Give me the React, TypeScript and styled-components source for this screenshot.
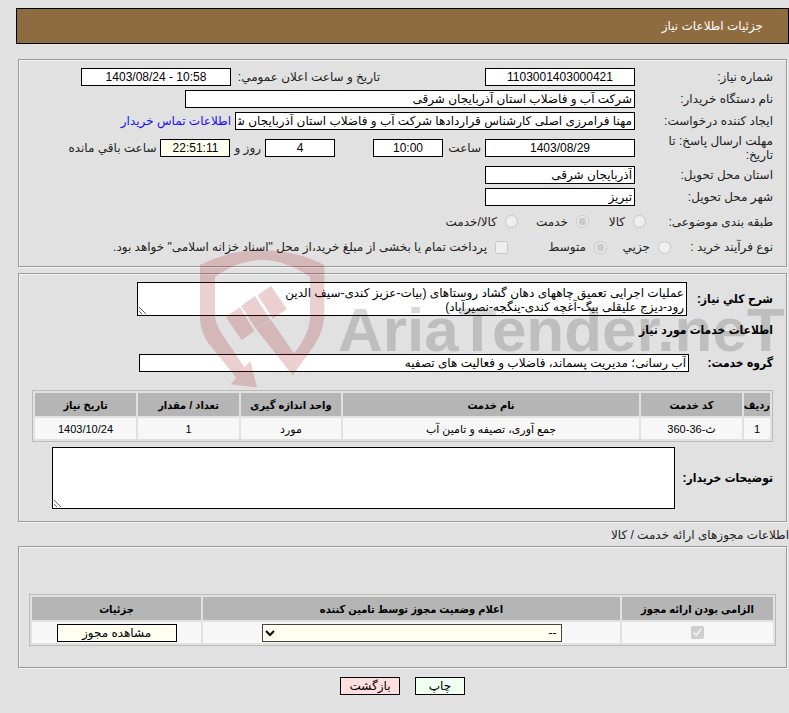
import React from "react";
import styled, { createGlobalStyle } from "styled-components";

const GlobalStyle = createGlobalStyle`
  * { box-sizing: border-box; }
  body {
    margin: 0;
    background: #e1e1e1;
    color: #222;
    font: 12px/14px "Liberation Sans", "DejaVu Sans", sans-serif;
  }
  input, textarea, select, button { font: inherit; color: #000; border-radius: 0; }
`;

const boldStack = `"Liberation Sans", "DejaVu Sans Condensed", sans-serif`;

const Page = styled.main`
  position: relative;
  padding: 8px 0 16px 16px;
`;

const TitleBar = styled.header`
  display: flex;
  align-items: center;
  height: 36px;
  padding: 0 25px;
  background: #8f6b40;
  border: 1px solid #000;
  color: #fff;
  h1 { margin: 0; font-size: 12px; font-weight: normal; }
`;

const Panel = styled.fieldset<{ $top: number; $pad: string }>`
  min-width: 0;
  margin: ${(p) => p.$top}px 2px 0;
  padding: ${(p) => p.$pad};
  border: 1px solid #9a9a9a;
  box-shadow: 1px 1px 0 #f4f4f4, inset 1px 1px 0 #f4f4f4;
`;

const Row = styled.div<{ $h?: number; $top?: number; $end?: number }>`
  display: flex;
  align-items: center;
  gap: 4px;
  height: ${(p) => p.$h ?? 22}px;
  margin-top: ${(p) => p.$top ?? 0}px;
  padding-left: ${(p) => p.$end ?? 0}px;
`;

const FieldLabel = styled.label<{ $w?: number }>`
  flex: 0 0 ${(p) => p.$w ?? 134}px;
  padding-left: 20px;
`;

const BoldLabel = styled.label<{ $w: number }>`
  flex: 0 0 ${(p) => p.$w}px;
  font-family: ${boldStack};
  font-weight: bold;
  color: #000;
  white-space: nowrap;
`;

const GroupLabel = styled.span<{ $w: number }>`
  flex: 0 0 ${(p) => p.$w}px;
  white-space: nowrap;
`;

const Note = styled.span`
  white-space: nowrap;
`;

const InlineLabel = styled.label<{ $start?: number; $w: number }>`
  flex: 0 0 ${(p) => p.$w}px;
  white-space: nowrap;
  margin-right: ${(p) => p.$start ?? 0}px;
`;

const TextBox = styled.input<{ $w: number; $center?: boolean; $tint?: boolean; $start?: number }>`
  width: ${(p) => p.$w}px;
  height: 18px;
  padding: 0 2px;
  margin: 0 ${(p) => p.$start ?? 0}px 0 0;
  border: 1px solid #000;
  background: ${(p) => (p.$tint ? "#fffff0" : "#fff")};
  text-align: ${(p) => (p.$center ? "center" : "right")};
`;

const ContactLink = styled.a`
  color: #1a0dff;
  text-decoration: none;
  white-space: nowrap;
`;

const Choice = styled.label<{ $w: number }>`
  display: flex;
  align-items: center;
  gap: 8px;
  flex: 0 0 ${(p) => p.$w}px;
  white-space: nowrap;
  input { margin: 0; width: 13px; height: 13px; }
`;

const Area = styled.textarea<{ $h: number }>`
  flex: 1;
  height: ${(p) => p.$h}px;
  padding: 3px 2px 1px;
  border: 1px solid #000;
  background: #fff;
  overflow: hidden;
`;

const SubHeading = styled.h2`
  margin: 7px 0 17px;
  font-family: ${boldStack};
  font-size: 12px;
  line-height: 14px;
  color: #000;
`;

const Grid = styled.table<{ $top?: number }>`
  width: 100%;
  margin-top: ${(p) => p.$top ?? 0}px;
  table-layout: fixed;
  border: 1px solid #bbb;
  border-spacing: 2px;
  text-align: center;
  font-size: 11px;
  color: #000;
  th, td { padding: 0; }
  th {
    height: 23px;
    background: #b5b5b5;
    white-space: nowrap;
    font-family: ${boldStack};
  }
  td { height: 21px; background: #f7f7f7; }
  td input { display: block; margin: 0 auto; width: 13px; height: 13px; }
`;

const Col = styled.col<{ $w?: number }>`
  width: ${(p) => (p.$w ? `${p.$w}px` : "auto")};
`;

const Status = styled.select`
  display: block;
  width: 300px;
  height: 18px;
  margin: 0 auto;
  padding: 0;
  border: 1px solid #444;
  background: #fffff0;
  font-size: 12px;
`;

const ActionButton = styled.button<{ $w: number; $bg: string }>`
  display: block;
  width: ${(p) => p.$w}px;
  height: 18px;
  padding: 0;
  border: 1px solid #000;
  background: ${(p) => p.$bg};
  font-size: 12px;
  line-height: 16px;
`;

const CellAction = styled.div`
  display: flex;
  justify-content: center;
`;

const SectionTitle = styled.p`
  margin: 6px 0 0;
`;

const Footer = styled.footer`
  display: flex;
  justify-content: center;
  gap: 15px;
  margin: 9px 0 0;
`;

const Watermark = styled.svg`
  position: absolute;
  left: 195px;
  top: 245px;
  pointer-events: none;
`;

const Brand = styled.text`
  font: bold 62px "Liberation Sans", sans-serif;
`;

export default function App() {
  return (
    <Page dir="rtl">
      <GlobalStyle />
      <TitleBar>
        <h1>جزئیات اطلاعات نیاز</h1>
      </TitleBar>

      <Panel $top={15} $pad="6px 13px 7px">
        <Row>
          <FieldLabel htmlFor="no">شماره نیاز:</FieldLabel>
          <TextBox id="no" $w={150} $center readOnly defaultValue="1103001403000421" />
          <InlineLabel htmlFor="pub" $w={145} $start={101}>تاریخ و ساعت اعلان عمومي:</InlineLabel>
          <TextBox id="pub" dir="ltr" $w={150} $center readOnly defaultValue="1403/08/24 - 10:58" />
        </Row>
        <Row>
          <FieldLabel htmlFor="org">نام دستگاه خریدار:</FieldLabel>
          <TextBox id="org" $w={450} readOnly defaultValue="شرکت آب و فاضلاب استان آذربایجان شرقی" />
        </Row>
        <Row>
          <FieldLabel htmlFor="creator">ایجاد کننده درخواست:</FieldLabel>
          <TextBox id="creator" $w={400} readOnly defaultValue="مهنا فرامرزی اصلی کارشناس قراردادها شرکت آب و فاضلاب استان آذربایجان شرقی" />
          <ContactLink href="#contact">اطلاعات تماس خریدار</ContactLink>
        </Row>
        <Row $h={32}>
          <FieldLabel htmlFor="due">مهلت ارسال پاسخ: تا تاریخ:</FieldLabel>
          <TextBox id="due" $w={150} $center readOnly defaultValue="1403/08/29" />
          <InlineLabel htmlFor="hour" $w={34}>ساعت</InlineLabel>
          <TextBox id="hour" $w={70} $center readOnly defaultValue="10:00" />
          <TextBox aria-label="روز" $w={70} $center $start={34} readOnly defaultValue="4" />
          <InlineLabel htmlFor="left" $w={26}>روز و</InlineLabel>
          <TextBox id="left" $w={70} $center $tint readOnly defaultValue="22:51:11" />
          <Note>ساعت باقي مانده</Note>
        </Row>
        <Row>
          <FieldLabel htmlFor="province">استان محل تحویل:</FieldLabel>
          <TextBox id="province" $w={150} readOnly defaultValue="آذربایجان شرقی" />
        </Row>
        <Row>
          <FieldLabel htmlFor="city">شهر محل تحویل:</FieldLabel>
          <TextBox id="city" $w={150} readOnly defaultValue="تبریز" />
        </Row>
        <Row $h={27} role="radiogroup" aria-label="طبقه بندی موضوعی">
          <GroupLabel $w={123}>طبقه بندی موضوعی:</GroupLabel>
          <Choice $w={53}><input type="radio" name="kind" disabled />کالا</Choice>
          <Choice $w={67}><input type="radio" name="kind" disabled defaultChecked />خدمت</Choice>
          <Choice $w={80}><input type="radio" name="kind" disabled />کالا/خدمت</Choice>
        </Row>
        <Row $h={24} role="group" aria-label="نوع فرآیند خرید">
          <GroupLabel $w={98}>نوع فرآیند خرید :</GroupLabel>
          <Choice $w={60}><input type="radio" name="size" disabled />جزیي</Choice>
          <Choice $w={95}><input type="radio" name="size" disabled defaultChecked />متوسط</Choice>
          <Choice $w={410}><input type="checkbox" disabled />پرداخت تمام یا بخشی از مبلغ خرید،از محل "اسناد خزانه اسلامی" خواهد بود.</Choice>
        </Row>
      </Panel>

      <Panel $top={6} $pad="8px 13px 12px">
        <Row $h={34} $end={105}>
          <BoldLabel htmlFor="desc" $w={82}>شرح کلي نیاز:</BoldLabel>
          <Area id="desc" $h={34} readOnly defaultValue={"عملیات اجرایی تعمیق چاههای دهان گشاد روستاهای (بیات-عزیز کندی-سیف الدین\nرود-دیزج علیقلی بیگ-آغچه کندی-ینگجه-نصیرآباد)"} />
        </Row>
        <SubHeading>اطلاعات خدمات مورد نیاز</SubHeading>
        <Row $h={18}>
          <BoldLabel htmlFor="group" $w={80}>گروه خدمت:</BoldLabel>
          <TextBox id="group" $w={550} readOnly defaultValue="آب رسانی؛ مدیریت پسماند، فاضلاب و فعالیت های تصفیه" />
        </Row>
        <Grid $top={18}>
          <colgroup>
            <Col $w={26} /><Col $w={101} /><Col /><Col $w={100} /><Col $w={101} /><Col $w={101} />
          </colgroup>
          <thead>
            <tr><th>ردیف</th><th>کد خدمت</th><th>نام خدمت</th><th>واحد اندازه گیری</th><th>تعداد / مقدار</th><th>تاریخ نیاز</th></tr>
          </thead>
          <tbody>
            <tr><td>1</td><td>ث-36-360</td><td>جمع آوری، تصیفه و تامین آب</td><td>مورد</td><td>1</td><td>1403/10/24</td></tr>
          </tbody>
        </Grid>
        <Row $h={62} $top={5} $end={20}>
          <BoldLabel htmlFor="notes" $w={94}>توضیحات خریدار:</BoldLabel>
          <Area id="notes" $h={62} readOnly />
        </Row>
      </Panel>

      <SectionTitle>اطلاعات مجوزهای ارائه خدمت / کالا</SectionTitle>

      <Panel $top={4} $pad="47px 10px 21px">
        <Grid>
          <colgroup>
            <Col $w={151} /><Col /><Col $w={169} />
          </colgroup>
          <thead>
            <tr><th>الزامی بودن ارائه مجوز</th><th>اعلام وضعیت مجوز توسط تامین کننده</th><th>جزئیات</th></tr>
          </thead>
          <tbody>
            <tr>
              <td><input type="checkbox" aria-label="الزامی بودن ارائه مجوز" disabled defaultChecked /></td>
              <td><Status aria-label="اعلام وضعیت مجوز"><option>--</option></Status></td>
              <td><CellAction><ActionButton $w={120} $bg="#fffff0">مشاهده مجوز</ActionButton></CellAction></td>
            </tr>
          </tbody>
        </Grid>
      </Panel>

      <Footer>
        <ActionButton $w={50} $bg="#f0fff0">چاپ</ActionButton>
        <ActionButton $w={60} $bg="#ffdfdf">بازگشت</ActionButton>
      </Footer>

      <Watermark width="594" height="145" viewBox="0 0 594 145" aria-hidden="true">
        <g fill="rgb(165,20,30)" opacity="0.2" transform="scale(0.3333)">
          <path d="M15 60 Q105 15 200 15 Q300 15 388 60 V215 Q385 262 355 305 L293 391 L184 253 L228 225 L297 325 Q345 265 345 215 V95 Q270 45 200 45 Q130 45 60 95 V215 Q64 245 90 280 L148 367 L166 349 L186 427 L107 418 L124 398 L38 292 Q18 262 15 225 Z" />
          <path d="M135 187 L178 258 L140 285 L92 215 Z" />
          <path d="M180 153 L226 224 L184 253 L138 183 Z" />
          <path d="M228 122 L275 192 L234 221 L188 151 Z" />
        </g>
        <g fill="#000" opacity="0.15">
          <Brand x="143" y="106" direction="ltr">AriaTender.neT</Brand>
        </g>
      </Watermark>
    </Page>
  );
}
